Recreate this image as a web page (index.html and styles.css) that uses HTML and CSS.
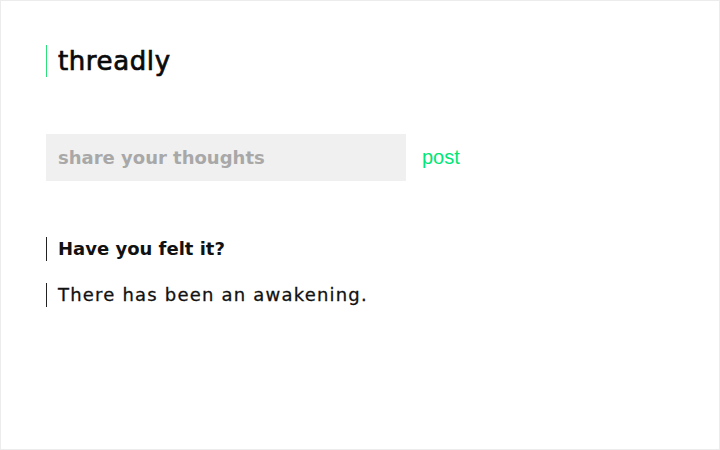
FILE: index.html
```html
<!DOCTYPE html>
<html lang="en">
<head>
    <meta charset="UTF-8">
    <meta name="viewport" content="width=device-width, initial-scale=1.0">
    <title>threadly</title>
    <link rel="stylesheet" href="styles.css">
</head>
<body>
    <div class="page">
        <header>
            <h1>threadly</h1>
        </header>

        <form class="composer" onsubmit="return false;">
            <input type="text" placeholder="share your thoughts">
            <button type="submit">post</button>
        </form>

        <ul class="thread">
            <li class="strong">Have you felt it?</li>
            <li>There has been an awakening.</li>
        </ul>
    </div>
</body>
</html>
```

FILE: styles.css
```css
/* Reset styles */
* {
    margin: 0;
    padding: 0;
    box-sizing: border-box;
}

body {
    font-family: 'DejaVu Sans', 'Noto Sans', sans-serif;
    background-color: #fff;
    color: #111;
}

.page {
    width: 720px;
    height: 450px;
    border: 1px solid #ececec;
    padding: 44px 0 0 45px;
}

header {
    border-left: 1px solid #2ee07a;
    height: 32px;
    padding-left: 11px;
    display: flex;
    align-items: center;
}

header h1 {
    font-size: 26px;
    font-weight: normal;
    letter-spacing: 0.6px;
    -webkit-text-stroke: 0.7px #0a0a0a;
    color: #0a0a0a;
}

.composer {
    display: flex;
    align-items: center;
    margin-top: 57px;
}

.composer input {
    width: 360px;
    height: 47px;
    border: none;
    outline: none;
    background-color: #f0f0f0;
    padding: 0 12px;
    font-family: inherit;
    font-size: 18px;
    font-weight: bold;
    color: #333;
}

.composer input::placeholder {
    color: #a8a8a8;
}

.composer button {
    background: none;
    border: none;
    margin-left: 16px;
    font-family: 'Liberation Sans', Arial, sans-serif;
    font-size: 20px;
    color: #00e676;
    cursor: pointer;
}

.thread {
    list-style: none;
    margin-top: 56px;
}

.thread li {
    border-left: 1px solid #222;
    padding-left: 11px;
    font-size: 18px;
    line-height: 24px;
    margin-bottom: 22px;
    letter-spacing: 1.2px;
    -webkit-text-stroke: 0.3px #111;
}

.thread li.strong {
    font-weight: bold;
    letter-spacing: 0;
    -webkit-text-stroke: 0;
}
```
